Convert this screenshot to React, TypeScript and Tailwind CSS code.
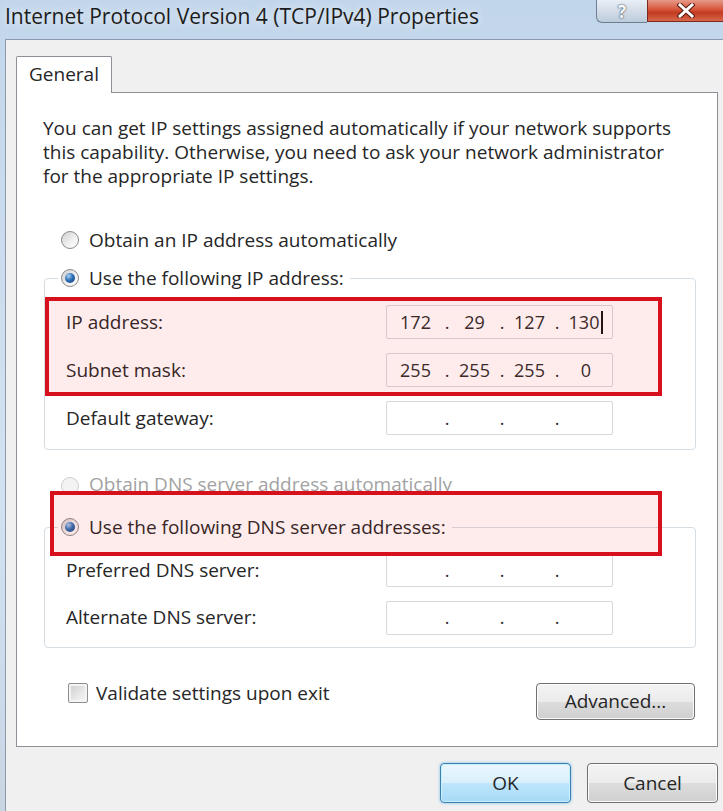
import React from "react";

const FONT = { fontFamily: '"Open Sans", "Noto Sans", "Liberation Sans", sans-serif' };

function Radio({ checked, disabled }: { checked?: boolean; disabled?: boolean }) {
  return (
    <span
      className={
        disabled
          ? "w-[18px] h-[18px] rounded-full border border-[#cfcfcf] bg-[#f3f3f3] flex items-center justify-center shrink-0"
          : "w-[18px] h-[18px] rounded-full border border-[#8a8a8a] bg-[linear-gradient(135deg,#cfcfcf_0%,#f2f2f2_60%,#ffffff_100%)] flex items-center justify-center shrink-0"
      }
    >
      {checked && (
        <span className="w-[10px] h-[10px] rounded-full bg-[radial-gradient(circle_at_35%_30%,#a9d3f5_0%,#2f6fb6_45%,#0f3f7c_100%)]" />
      )}
    </span>
  );
}

function IpBox({ values, cursor }: { values?: string[]; cursor?: boolean }) {
  const v = values ?? ["", "", "", ""];
  return (
    <div className="w-[227px] h-[34px] border border-[#d6d8dd] rounded-[2px] bg-white flex items-center text-[18px] text-[#2a2a2a]">
      <span className="w-[57px] text-center">{v[0]}</span>
      <span className="w-[6px] text-center">.</span>
      <span className="w-[49px] text-center">{v[1]}</span>
      <span className="w-[6px] text-center">.</span>
      <span className="w-[49px] text-center">{v[2]}</span>
      <span className="w-[6px] text-center">.</span>
      <span className="w-[52px] text-center flex items-center justify-center">
        {v[3]}
        {cursor && <span className="inline-block w-[2px] h-[23px] bg-[#111] ml-[2px]" />}
      </span>
    </div>
  );
}

function Row({ label, children, h }: { label: string; children: React.ReactNode; h: string }) {
  return (
    <div className={`flex items-center ml-[8px] ${h}`}>
      <span className="w-[320px] text-[19px] text-[#262626]">{label}</span>
      {children}
    </div>
  );
}

export default function App() {
  return (
    <div
      className="w-[723px] h-[811px] overflow-hidden bg-[linear-gradient(180deg,#c2d6eb_0%,#d3e2f1_60%,#c8d6e4_100%)]"
      style={FONT}
    >
      {/* Title bar */}
      <div className="h-[39px] flex items-start relative">
        <span className="ml-[5px] mt-[2px] text-[21px] leading-[28px] text-[#1c1c1c] [text-shadow:0_0_8px_rgba(255,255,255,0.9)]">
          Internet Protocol Version 4 (TCP/IPv4) Properties
        </span>
        <div className="ml-auto flex">
          <div className="w-[51px] h-[23px] border border-t-0 border-r-0 border-[#6f7f93] rounded-bl-[6px] bg-[linear-gradient(180deg,#e9eff6_0%,#d3dde8_50%,#bccbdb_100%)] flex items-center justify-center">
            <span className="text-[17px] font-bold text-white leading-none [text-shadow:0_0_1px_#34465c,0_0_2px_#34465c]">?</span>
          </div>
          <div className="w-[76px] h-[22px] border-b border-l border-[#7a2a1e] bg-[linear-gradient(180deg,#e69a88_0%,#d6553b_45%,#c23a21_60%,#d7674c_100%)] flex items-center justify-center">
            <svg width="18" height="15" viewBox="0 0 18 15">
              <path d="M3 2 L15 13 M15 2 L3 13" stroke="#5a1b10" strokeWidth="5" strokeLinecap="square" />
              <path d="M3 2 L15 13 M15 2 L3 13" stroke="#ffffff" strokeWidth="3" strokeLinecap="square" />
            </svg>
          </div>
        </div>
      </div>

      {/* Body */}
      <div className="ml-[5px] h-[772px] border-l border-t border-[#8d9aab] bg-[#f0f0f0] pl-[10px] pt-[16px]">
        {/* Tab strip */}
        <div className="flex">
          <div className="relative z-10 w-[96px] h-[37px] -mb-px border border-b-0 border-[#8c8f96] bg-white flex items-center justify-center rounded-t-[2px]">
            <span className="text-[19px] text-[#262626] mt-[-2px]">General</span>
          </div>
        </div>

        {/* Panel */}
        <div className="relative w-[702px] h-[655px] border border-[#8c8f96] bg-white pl-[26px] pt-[23px]">
          <p className="text-[19px] leading-[24px] text-[#262626]">
            You can get IP settings assigned automatically if your network supports
            <br />
            this capability. Otherwise, you need to ask your network administrator
            <br />
            for the appropriate IP settings.
          </p>

          <div className="ml-[18px] mt-[34px] h-[36px] flex items-center gap-[10px]">
            <Radio />
            <span className="text-[19px] text-[#262626]">Obtain an IP address automatically</span>
          </div>

          <fieldset className="ml-[1px] mt-[2px] w-[652px] border border-[#d5dde3] rounded-[4px] pl-[13px] pb-[7px]">
            <legend className="pl-[3px] pr-[6px]">
              <div className="h-[36px] flex items-center gap-[10px]">
                <Radio checked />
                <span className="text-[19px] text-[#262626]">Use the following IP address:</span>
              </div>
            </legend>
            <div className="mt-[2px]">
              <Row label="IP address:" h="h-[48px]">
                <IpBox values={["172", "29", "127", "130"]} cursor />
              </Row>
              <Row label="Subnet mask:" h="h-[48px]">
                <IpBox values={["255", "255", "255", "0"]} />
              </Row>
              <Row label="Default gateway:" h="h-[48px]">
                <IpBox />
              </Row>
            </div>
          </fieldset>

          <div className="ml-[18px] mt-[18px] h-[36px] flex items-center gap-[10px]">
            <Radio disabled />
            <span className="text-[19px] text-[#a3a3a3] mt-[-3px]">Obtain DNS server address automatically</span>
          </div>

          <fieldset className="ml-[1px] mt-[5px] w-[652px] border border-[#d5dde3] rounded-[4px] pl-[13px] pb-[6px]">
            <legend className="pl-[3px] pr-[6px]">
              <div className="h-[36px] flex items-center gap-[10px]">
                <Radio checked />
                <span className="text-[19px] text-[#262626]">Use the following DNS server addresses:</span>
              </div>
            </legend>
            <div className="mt-[1px]">
              <Row label="Preferred DNS server:" h="h-[48px]">
                <IpBox />
              </Row>
              <Row label="Alternate DNS server:" h="h-[47px]">
                <IpBox />
              </Row>
            </div>
          </fieldset>

          <div className="mt-[33px] flex items-start">
            <div className="ml-[25px] h-[24px] flex items-center gap-[8px]">
              <span className="w-[20px] h-[20px] border border-[#8e8e8e] rounded-[2px] bg-[linear-gradient(135deg,#cdcdcd_0%,#e9e9e9_60%,#f7f7f7_100%)] shadow-[inset_0_0_0_2px_#f4f4f4]" />
              <span className="text-[19px] text-[#262626]">Validate settings upon exit</span>
            </div>
            <button className="ml-auto mr-[22px] mt-[2px] w-[159px] h-[37px] border border-[#707070] rounded-[4px] bg-[linear-gradient(180deg,#f4f4f4_0%,#ebebeb_50%,#dddddd_51%,#cfcfcf_100%)] shadow-[inset_0_0_0_1px_#fbfbfb] text-[19px] text-[#262626]">
              Advanced...
            </button>
          </div>

          {/* Annotation overlays */}
          <div className="absolute left-[28px] top-[204px] w-[617px] h-[99px] border-[4px] border-[#d6111c] bg-[rgba(240,40,40,0.09)] pointer-events-none" />
          <div className="absolute left-[33px] top-[398px] w-[612px] h-[65px] border-[4px] border-[#d6111c] bg-[rgba(240,40,40,0.09)] pointer-events-none" />
        </div>

        {/* Dialog buttons */}
        <div className="w-[702px] mt-[16px] flex justify-end gap-[16px]">
          <button className="w-[131px] h-[40px] border border-[#3c7fb1] rounded-[4px] bg-[linear-gradient(180deg,#eaf6fd_0%,#d9f0fc_50%,#bee6fd_51%,#a7d9f5_100%)] shadow-[inset_0_0_0_1px_#c8f0ff,0_0_3px_#74b8e6] text-[19px] text-[#262626]">
            OK
          </button>
          <button className="w-[131px] h-[40px] border border-[#707070] rounded-[4px] bg-[linear-gradient(180deg,#f4f4f4_0%,#ebebeb_50%,#dddddd_51%,#cfcfcf_100%)] shadow-[inset_0_0_0_1px_#fbfbfb] text-[19px] text-[#262626]">
            Cancel
          </button>
        </div>
      </div>
    </div>
  );
}
